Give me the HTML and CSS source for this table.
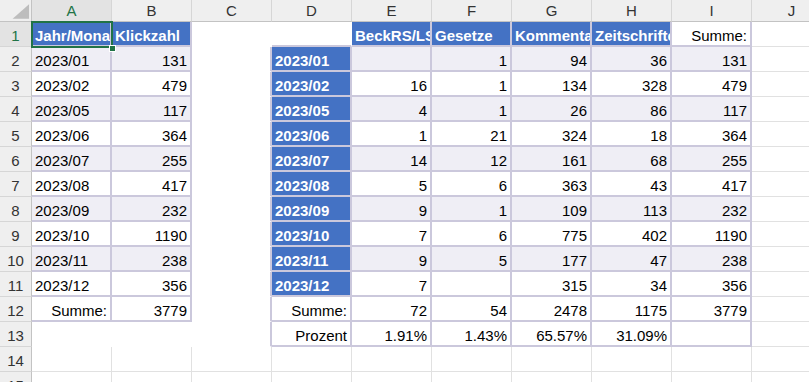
FILE: index.html
```html
<!DOCTYPE html>
<html lang="de">
<head>
<meta charset="utf-8">
<title>Klickzahlen</title>
<link rel="stylesheet" href="styles.css">
</head>
<body>
<div class="sheet">
  <div class="corner"><svg width="32" height="22" viewBox="0 0 32 22"><polygon points="13,19 30,19 30,4" fill="#bdbdbd"/></svg></div>
  <div class="ch sel">A</div><div class="ch">B</div><div class="ch">C</div><div class="ch">D</div><div class="ch">E</div><div class="ch">F</div><div class="ch">G</div><div class="ch">H</div><div class="ch">I</div><div class="ch">J</div>

  <div class="rh sel">1</div>
  <div class="c t h">Jahr/Monat</div><div class="c t h">Klickzahl</div><div class="c w"></div><div class="c w et"></div>
  <div class="c t h">BeckRS/LSK</div><div class="c t h">Gesetze</div><div class="c t h">Kommentare</div><div class="c t h">Zeitschriften</div><div class="c t r">Summe:</div><div class="c"></div>

  <div class="rh">2</div>
  <div class="c t b">2023/01</div><div class="c t b r">131</div><div class="c w el"></div><div class="c t h">2023/01</div>
  <div class="c t b r"></div><div class="c t b r">1</div><div class="c t b r">94</div><div class="c t b r">36</div><div class="c t b r">131</div><div class="c"></div>

  <div class="rh">3</div>
  <div class="c t">2023/02</div><div class="c t r">479</div><div class="c w el"></div><div class="c t h">2023/02</div>
  <div class="c t r">16</div><div class="c t r">1</div><div class="c t r">134</div><div class="c t r">328</div><div class="c t r">479</div><div class="c"></div>

  <div class="rh">4</div>
  <div class="c t b">2023/05</div><div class="c t b r">117</div><div class="c w el"></div><div class="c t h">2023/05</div>
  <div class="c t b r">4</div><div class="c t b r">1</div><div class="c t b r">26</div><div class="c t b r">86</div><div class="c t b r">117</div><div class="c"></div>

  <div class="rh">5</div>
  <div class="c t">2023/06</div><div class="c t r">364</div><div class="c w el"></div><div class="c t h">2023/06</div>
  <div class="c t r">1</div><div class="c t r">21</div><div class="c t r">324</div><div class="c t r">18</div><div class="c t r">364</div><div class="c"></div>

  <div class="rh">6</div>
  <div class="c t b">2023/07</div><div class="c t b r">255</div><div class="c w el"></div><div class="c t h">2023/07</div>
  <div class="c t b r">14</div><div class="c t b r">12</div><div class="c t b r">161</div><div class="c t b r">68</div><div class="c t b r">255</div><div class="c"></div>

  <div class="rh">7</div>
  <div class="c t">2023/08</div><div class="c t r">417</div><div class="c w el"></div><div class="c t h">2023/08</div>
  <div class="c t r">5</div><div class="c t r">6</div><div class="c t r">363</div><div class="c t r">43</div><div class="c t r">417</div><div class="c"></div>

  <div class="rh">8</div>
  <div class="c t b">2023/09</div><div class="c t b r">232</div><div class="c w el"></div><div class="c t h">2023/09</div>
  <div class="c t b r">9</div><div class="c t b r">1</div><div class="c t b r">109</div><div class="c t b r">113</div><div class="c t b r">232</div><div class="c"></div>

  <div class="rh">9</div>
  <div class="c t">2023/10</div><div class="c t r">1190</div><div class="c w el"></div><div class="c t h">2023/10</div>
  <div class="c t r">7</div><div class="c t r">6</div><div class="c t r">775</div><div class="c t r">402</div><div class="c t r">1190</div><div class="c"></div>

  <div class="rh">10</div>
  <div class="c t b">2023/11</div><div class="c t b r">238</div><div class="c w el"></div><div class="c t h">2023/11</div>
  <div class="c t b r">9</div><div class="c t b r">5</div><div class="c t b r">177</div><div class="c t b r">47</div><div class="c t b r">238</div><div class="c"></div>

  <div class="rh">11</div>
  <div class="c t">2023/12</div><div class="c t r">356</div><div class="c w el"></div><div class="c t h">2023/12</div>
  <div class="c t r">7</div><div class="c t r"></div><div class="c t r">315</div><div class="c t r">34</div><div class="c t r">356</div><div class="c"></div>

  <div class="rh">12</div>
  <div class="c t r">Summe:</div><div class="c t r">3779</div><div class="c w el"></div><div class="c t r">Summe:</div>
  <div class="c t r">72</div><div class="c t r">54</div><div class="c t r">2478</div><div class="c t r">1175</div><div class="c t r">3779</div><div class="c"></div>

  <div class="rh">13</div>
  <div class="c w"></div><div class="c w"></div><div class="c w el"></div><div class="c t r">Prozent</div>
  <div class="c t r">1.91%</div><div class="c t r">1.43%</div><div class="c t r">65.57%</div><div class="c t r">31.09%</div><div class="c t"></div><div class="c"></div>

  <div class="rh">14</div>
  <div class="c"></div><div class="c"></div><div class="c"></div><div class="c"></div><div class="c"></div><div class="c"></div><div class="c"></div><div class="c"></div><div class="c"></div><div class="c"></div>

  <div class="rh">15</div>
  <div class="c"></div><div class="c"></div><div class="c"></div><div class="c"></div><div class="c"></div><div class="c"></div><div class="c"></div><div class="c"></div><div class="c"></div><div class="c"></div>

  <div class="selbox"><div class="handle"></div></div>
</div>
</body>
</html>
```

FILE: styles.css
```css
* {
  box-sizing: border-box;
  margin: 0;
  padding: 0;
}

body {
  margin: 0;
  width: 809px;
  height: 382px;
  overflow: hidden;
  background: #fff;
  font-family: "Liberation Sans", Arial, sans-serif;
}

.sheet {
  position: relative;
  display: grid;
  grid-template-columns: 32px repeat(10, 80px);
  grid-template-rows: 22px repeat(15, 25px);
  width: max-content;
}

.corner {
  display: flex;
  background: #efefef;
  border-right: 1px solid #c3c3c3;
  border-bottom: 1px solid #c3c3c3;
}

.ch {
  background: #efefef;
  border-right: 1px solid #d6d6d6;
  border-bottom: 1px solid #c3c3c3;
  text-align: center;
  font-size: 15px;
  line-height: 21px;
  color: #333;
}

.rh {
  background: #efefef;
  border-right: 1px solid #c3c3c3;
  border-bottom: 1px solid #d6d6d6;
  text-align: center;
  font-size: 15px;
  line-height: 20px;
  padding-top: 4px;
  color: #333;
}

.ch.sel,
.rh.sel {
  color: #217346;
  background: #e3e3e3;
}

.c {
  border-right: 1px solid #e1e1e1;
  border-bottom: 1px solid #e1e1e1;
  font-size: 15px;
  line-height: 20px;
  padding: 4px 3px 0;
  white-space: nowrap;
  overflow: hidden;
  color: #000;
}

.w {
  border-color: #fff;
}

.t {
  border-right: 2px solid #cbc8dc;
  border-bottom: 2px solid #cbc8dc;
}

.el {
  border-right: 2px solid #cbc8dc;
}

.et {
  border-bottom: 2px solid #cbc8dc;
}

.b {
  background: #efeef5;
}

.h {
  background: #4472c4;
  color: #fff;
  font-weight: bold;
}

.r {
  text-align: right;
}

.selbox {
  position: absolute;
  grid-column: 2 / 3;
  grid-row: 2 / 3;
  top: -1px;
  left: -1px;
  right: -1px;
  bottom: -1px;
  border: 2px solid #217346;
  pointer-events: none;
}

.handle {
  position: absolute;
  right: -5px;
  bottom: -6px;
  width: 7px;
  height: 7px;
  background: #217346;
  border: 1px solid #fff;
}
```
